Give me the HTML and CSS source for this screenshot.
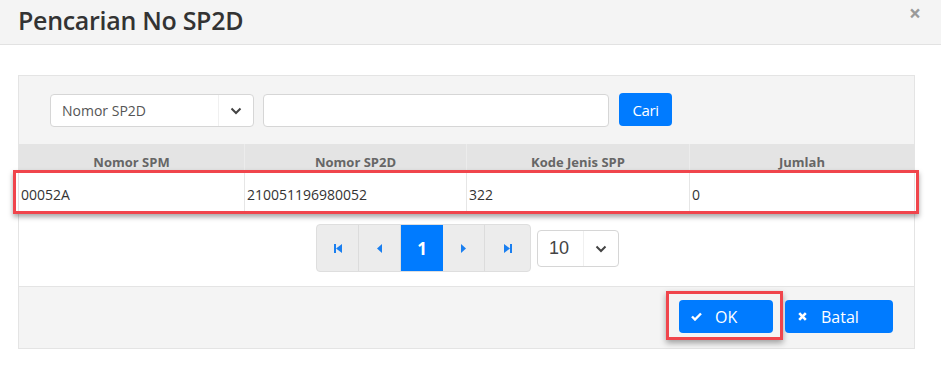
FILE: index.html
```html
<!DOCTYPE html>
<html>
<head>
<meta charset="utf-8">
<link rel="stylesheet" href="styles.css">
</head>
<body>
<div class="modal">
  <div class="modal-header">
    <h1 class="title">Pencarian No SP2D</h1>
    <span class="close">×</span>
  </div>
  <div class="modal-body">
    <div class="panel">
      <div class="toolbar">
        <div class="select sel-field">
          <span class="sel-text">Nomor SP2D</span>
          <span class="sel-arrow"><svg width="12" height="8" viewBox="0 0 12 8"><path d="M1.5 1.5 L6 6 L10.5 1.5" fill="none" stroke="#444" stroke-width="2"/></svg></span>
        </div>
        <div class="text-input"></div>
        <button class="btn btn-cari">Cari</button>
      </div>
      <div class="grid">
        <div class="grid-head">
          <div class="th">Nomor SPM</div>
          <div class="th">Nomor SP2D</div>
          <div class="th">Kode Jenis SPP</div>
          <div class="th">Jumlah</div>
        </div>
        <div class="grid-row">
          <div class="td">00052A</div>
          <div class="td">210051196980052</div>
          <div class="td">322</div>
          <div class="td">0</div>
        </div>
        <div class="row-highlight"></div>
      </div>
      <div class="pager-area">
        <div class="pager">
          <div class="pg"><svg width="8" height="9" viewBox="0 0 8 9"><rect x="0" y="0" width="2" height="9" fill="#1a7ff0"/><path d="M8 0 L2 4.5 L8 9 Z" fill="#1a7ff0"/></svg></div>
          <div class="pg"><svg width="5" height="9" viewBox="0 0 5 9"><path d="M5 0 L0 4.5 L5 9 Z" fill="#1a7ff0"/></svg></div>
          <div class="pg active">1</div>
          <div class="pg"><svg width="5" height="9" viewBox="0 0 5 9"><path d="M0 0 L5 4.5 L0 9 Z" fill="#1a7ff0"/></svg></div>
          <div class="pg"><svg width="8" height="9" viewBox="0 0 8 9"><path d="M0 0 L6 4.5 L0 9 Z" fill="#1a7ff0"/><rect x="6" y="0" width="2" height="9" fill="#1a7ff0"/></svg></div>
        </div>
        <div class="select size-field">
          <span class="size-text">10</span>
          <span class="size-arrow"><svg width="12" height="8" viewBox="0 0 12 8"><path d="M1.5 1.5 L6 6 L10.5 1.5" fill="none" stroke="#444" stroke-width="2"/></svg></span>
        </div>
      </div>
      <div class="panel-footer">
        <div class="ok-wrap">
          <button class="btn btn-ok"><svg width="11" height="9" viewBox="0 0 11 9"><path d="M1 4.5 L4 7.5 L10 1.5" fill="none" stroke="#fff" stroke-width="2.4"/></svg><span>OK</span></button>
        </div>
        <button class="btn btn-batal"><svg width="9" height="9" viewBox="0 0 9 9"><path d="M1.2 1.2 L7.8 7.8 M7.8 1.2 L1.2 7.8" stroke="#fff" stroke-width="2.6"/></svg><span>Batal</span></button>
      </div>
    </div>
  </div>
</div>
</body>
</html>
```

FILE: styles.css
```css
* { box-sizing: border-box; }
body {
  margin: 0;
  background: #fff;
  font-family: "Open Sans", "Noto Sans", sans-serif;
  color: #333;
}
.modal { width: 941px; height: 371px; background: #fff; }
.modal-header {
  height: 45px;
  background: #f4f4f4;
  border-bottom: 1px solid #e2e2e2;
  display: flex;
  align-items: center;
  justify-content: space-between;
  padding: 0 22px 0 18px;
}
.title {
  margin: 0;
  font-size: 25px;
  font-weight: 600;
  color: #333;
  letter-spacing: -0.3px;
  position: relative;
  top: -2px;
}
.close {
  font-size: 21px;
  font-weight: 700;
  color: #9a9a9a;
  position: relative;
  top: -9px;
  right: -2px;
}
.modal-body { padding: 30px 26px 0 18px; }
.panel {
  width: 897px;
  border: 1px solid #e4e4e4;
  background: #fff;
}
.toolbar {
  background: #f4f4f4;
  height: 68px;
  display: flex;
  align-items: flex-start;
  padding: 18px 0 0 31px;
}
.select {
  display: flex;
  align-items: stretch;
  background: #fff;
  border: 1px solid #d6d6d6;
  border-radius: 4px;
}
.sel-field { width: 204px; height: 33px; }
.sel-text {
  flex: 1;
  font-size: 14px;
  color: #555;
  display: flex;
  align-items: center;
  padding-left: 11px;
  border-right: 1px solid #f0f0f0;
}
.sel-arrow {
  width: 34px;
  display: flex;
  align-items: center;
  justify-content: center;
}
.text-input {
  width: 346px;
  height: 33px;
  margin-left: 9px;
  background: #fff;
  border: 1px solid #d6d6d6;
  border-radius: 4px;
}
.btn {
  border: none;
  background: #007bff;
  color: #fff;
  font-family: "Open Sans", "Noto Sans", sans-serif;
  border-radius: 4px;
  cursor: pointer;
}
.btn-cari {
  margin-left: 10px;
  width: 53px;
  height: 33px;
  margin-top: -1px;
  font-size: 15px;
  padding: 0;
  letter-spacing: -0.4px;
}
.grid { position: relative; }
.grid-head {
  display: grid;
  grid-template-columns: 226px 222px 223px 224px;
  background: #e4e4e4;
  height: 28px;
}
.th {
  font-size: 13px;
  font-weight: 700;
  color: #666;
  text-align: center;
  padding-top: 9px;
  border-right: 1px solid #ececec;
}
.th:last-child { border-right: none; }
.grid-row {
  display: grid;
  grid-template-columns: 226px 222px 223px 224px;
  height: 40px;
  border-bottom: 1px solid #e8e8e8;
}
.td {
  font-size: 14px;
  color: #333;
  padding: 12px 0 0 2px;
  border-right: 1px solid #e6e6e6;
  border-top: 1px solid #e6e6e6;
  letter-spacing: 0;
}
.td:last-child { border-right: none; }
.row-highlight {
  position: absolute;
  left: -6px;
  top: 26px;
  width: 906px;
  height: 44px;
  border: 3px solid #f0454c;
  box-shadow: 0 3px 5px rgba(0,0,0,0.35);
}
.pager-area {
  height: 74px;
  display: flex;
  align-items: flex-start;
  padding-left: 297px;
  padding-top: 12px;
}
.pager {
  display: flex;
  height: 48px;
  border: 1px solid #dedede;
  border-radius: 4px;
  overflow: hidden;
  background: #ececec;
}
.pg {
  width: 42px;
  display: flex;
  align-items: center;
  justify-content: center;
  border-right: 1px solid #dcdcdc;
}
.pg:last-child { border-right: none; width: 45px; }
.pg.active {
  background: #007bff;
  color: #fff;
  font-size: 17px;
  font-weight: 700;
  border-right: none;
}
.size-field {
  width: 82px;
  height: 37px;
  margin-left: 6px;
  margin-top: 6px;
}
.size-text {
  flex: 1;
  font-size: 18px;
  color: #444;
  display: flex;
  align-items: center;
  padding-left: 11px;
  border-right: 1px solid #f0f0f0;
  font-family: "Liberation Sans", sans-serif;
}
.size-arrow {
  width: 34px;
  display: flex;
  align-items: center;
  justify-content: center;
}
.panel-footer {
  height: 62px;
  background: #f4f4f4;
  border-top: 1px solid #e4e4e4;
  display: flex;
  justify-content: flex-end;
  align-items: flex-start;
  padding: 13px 21px 0 0;
}
.ok-wrap {
  border: 3px solid #f0454c;
  padding: 6px 7px 4px 10px;
  margin-top: -9px;
  box-shadow: 0 3px 6px rgba(0,0,0,0.35);
  margin-right: 2px;
}
.btn-ok, .btn-batal {
  height: 33px;
  display: flex;
  align-items: center;
  font-size: 16px;
  padding: 0 0 0 12px;
  gap: 13px;
}
.btn-ok { width: 94px; }
.btn-batal { width: 108px; gap: 14px; padding-left: 13px; }
```
